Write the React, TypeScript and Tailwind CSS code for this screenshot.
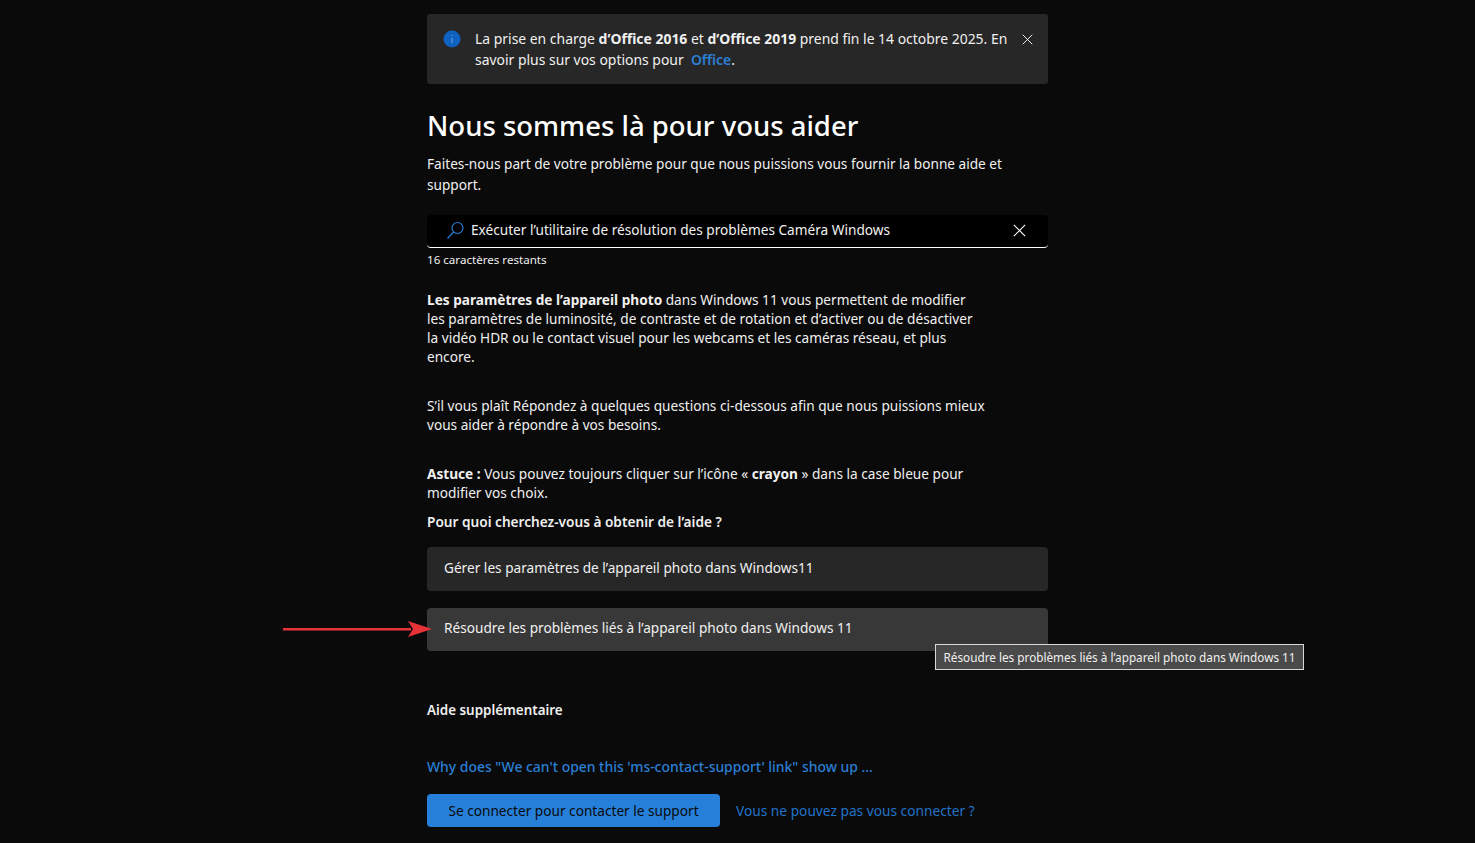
import React from "react";

const X = ({ size, cls }: { size: number; cls: string }) => (
  <svg width={size} height={size} viewBox="0 0 12 12" fill="none" stroke="currentColor" strokeWidth="1" className={cls}>
    <path d="M0.8 0.8 L11.2 11.2 M11.2 0.8 L0.8 11.2" />
  </svg>
);

export default function App() {
  return (
    <div className="relative h-[843px] overflow-hidden bg-[#0a0a0a] text-[#f0f0f0] font-['Noto_Sans','Open_Sans',sans-serif] text-[13.65px]">
      <div className="relative w-[621px] pt-[14px] ml-[427px]">
        <div className="flex h-[70px] rounded-[3px] bg-[#272727] pl-4 pr-[15px] pt-[14px]">
          <svg width="18" height="18" viewBox="0 0 18 18" className="mt-[2px] shrink-0">
            <circle cx="9" cy="9" r="8.5" fill="#0f62c0" />
            <path d="M9 5v1M9 8v5" stroke="#6ea6e6" strokeWidth="1" />
          </svg>
          <p className="ml-[14px] w-[536px] text-[13.93px] leading-[21px]">
            La prise en charge <b className="font-bold">d’Office 2016</b> et <b className="font-bold">d’Office 2019</b> prend fin le 14 octobre 2025. En savoir plus sur vos options pour&nbsp; <b className="font-semibold text-[#2b7fd4]">Office</b>.
          </p>
          <X size={11} cls="ml-auto mt-[6px] shrink-0 text-white" />
        </div>

        <h1 className="mt-[21px] text-[27.5px] leading-[42px] font-medium text-white">Nous sommes là pour vous aider</h1>
        <p className="mt-[7px] leading-[20.5px] w-[590px]">Faites-nous part de votre problème pour que nous puissions vous fournir la bonne aide et support.</p>

        <div className="mt-[20px] flex h-[33px] items-center rounded-[4px] border-b border-white bg-black pb-[2px] pl-[19px] pr-[22px]">
          <svg width="19" height="19" viewBox="0 0 19 19" fill="none" stroke="#2a7dd2" strokeWidth="1.2" className="shrink-0">
            <circle cx="11.5" cy="7" r="5.5" />
            <path d="M7.5 11 L1.5 17.5" />
          </svg>
          <span className="ml-[6px]">Exécuter l’utilitaire de résolution des problèmes Caméra Windows</span>
          <X size={13} cls="ml-auto shrink-0 text-white" />
        </div>
        <p className="mt-[3px] text-[11.6px] leading-[17px]">16 caractères restants</p>

        <p className="mt-[22px] w-[550px] leading-[19px]"><b className="font-bold">Les paramètres de l’appareil photo</b> dans Windows 11 vous permettent de modifier les paramètres de luminosité, de contraste et de rotation et d’activer ou de désactiver la vidéo HDR ou le contact visuel pour les webcams et les caméras réseau, et plus encore.</p>
        <p className="mt-[30px] w-[570px] leading-[19px]">S’il vous plaît Répondez à quelques questions ci-dessous afin que nous puissions mieux vous aider à répondre à vos besoins.</p>
        <p className="mt-[30px] w-[560px] leading-[19px]"><b className="font-bold">Astuce :</b> Vous pouvez toujours cliquer sur l’icône « <b className="font-bold">crayon</b> » dans la case bleue pour modifier vos choix.</p>
        <p className="mt-[10px] font-semibold leading-[19px]">Pour quoi cherchez-vous à obtenir de l’aide ?</p>

        <div className="mt-[16px] flex h-[44px] items-center rounded-[4px] bg-[#272727] px-[17px] pb-[2px]">Gérer les paramètres de l’appareil photo dans Windows11</div>
        <div className="mt-[17px] flex h-[43px] items-center rounded-[4px] bg-[#383838] px-[17px] pb-[2px]">Résoudre les problèmes liés à l’appareil photo dans Windows 11</div>

        <p className="mt-[50px] text-[13.4px] font-semibold leading-[19px]">Aide supplémentaire</p>
        <p className="mt-[37px] text-[13.93px] font-medium leading-[19px] text-[#2b7fd4]">Why does "We can't open this 'ms-contact-support' link" show up ...</p>
        <div className="mt-[18px] flex items-center">
          <div className="flex h-[33px] w-[293px] items-center justify-center rounded-[4px] bg-[#2680d9] pt-[1px] text-[#0a0a0a]">Se connecter pour contacter le support</div>
          <span className="ml-[16px] pt-[1px] text-[13.72px] text-[#2273c7]">Vous ne pouvez pas vous connecter ?</span>
        </div>

        <svg width="150" height="16" viewBox="0 0 150 16" className="absolute left-[-144px] top-[621px]">
          <path d="M0 7 L128 7 L128 9.5 L0 9.5 Z" fill="#e8323a" />
          <path d="M125 0 L149 8 L125 16 L130 8 Z" fill="#e8323a" />
        </svg>
        <div className="absolute left-[508px] top-[644px] flex h-[26px] w-[369px] items-center justify-center whitespace-nowrap border border-[#d8d8d8] bg-[#4a4a4a] pt-[1px] text-[11.75px] text-[#f0f0f0]">Résoudre les problèmes liés à l’appareil photo dans Windows 11</div>
      </div>
    </div>
  );
}
